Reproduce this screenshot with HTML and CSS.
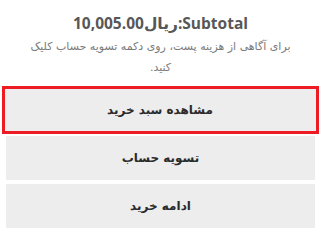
FILE: index.html
```html
<!DOCTYPE html>
<html lang="fa">
<head>
<meta charset="utf-8">
<link rel="stylesheet" href="styles.css">
</head>
<body>
<div class="cart">
  <p class="total" dir="rtl"><strong>Subtotal:</strong><span class="amount">ریال10,005.00</span></p>
  <p class="note" dir="rtl">برای آگاهی از هزینه پست، روی دکمه تسویه حساب کلیک<br>کنید.</p>
  <div class="buttons" dir="rtl">
    <a class="btn btn-active">مشاهده سبد خرید</a>
    <a class="btn">تسویه حساب</a>
    <a class="btn">ادامه خرید</a>
  </div>
</div>
</body>
</html>
```
FILE: styles.css
```css
html, body {
  margin: 0;
  padding: 0;
  background: #ffffff;
}
body {
  font-family: "DejaVu Sans", "Noto Sans", sans-serif;
}
.cart {
  padding: 13px 5px 0 6px;
  display: flex;
  flex-direction: column;
  align-items: stretch;
}
.total {
  margin: 0;
  text-align: center;
  font-family: "Open Sans", "DejaVu Sans", sans-serif;
  font-weight: 700;
  font-size: 15.5px;
  line-height: 20px;
  color: #575757;
}
.total strong { font-weight: 700; }
.amount {
  font-family: "Open Sans", "DejaVu Sans", sans-serif;
  font-weight: 700;
}
.note {
  margin: 3px auto 0;
  max-width: 275px;
  text-align: center;
  font-size: 11px;
  line-height: 21px;
  color: #7a7a7a;
}
.buttons {
  margin-top: 8px;
  display: flex;
  flex-direction: column;
  gap: 4px;
}
.btn {
  display: flex;
  align-items: center;
  justify-content: center;
  height: 44px;
  background: #ededed;
  color: #2b2b2b;
  font-weight: 700;
  font-size: 12px;
  text-decoration: none;
}
.btn-active {
  height: 42px;
  border: 3px solid #ed1c24;
  margin: 0 -4px -2px -4px;
  padding: 0 1px 0 0;
}
```
